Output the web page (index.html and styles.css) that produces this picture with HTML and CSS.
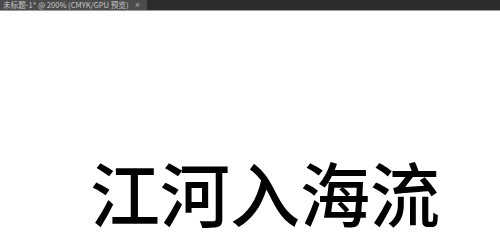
FILE: index.html
```html
<!DOCTYPE html>
<html>
<head>
<meta charset="utf-8">
<link rel="stylesheet" href="styles.css">
</head>
<body>
<div class="tabbar">
  <div class="tab"><span class="tab-title">未标题-1* @ 200% (CMYK/GPU 预览)</span><span class="tab-close">×</span></div>
</div>
<div class="canvas">
  <div class="headline">江河入海流</div>
</div>
</body>
</html>
```
FILE: styles.css
```css
html, body {
  margin: 0;
  padding: 0;
  width: 500px;
  height: 243px;
  overflow: hidden;
  background: #ffffff;
}
.tabbar {
  height: 10px;
  background: #2c2c2c;
  display: flex;
  border-bottom: 1px solid #9a9a9a;
}
.tab {
  width: 147px;
  background: #4b4b4b;
  display: flex;
  align-items: center;
  padding-left: 3px;
  box-sizing: border-box;
  gap: 6px;
}
.tab-title {
  font-family: "Noto Sans CJK SC", sans-serif;
  font-size: 7.6px;
  line-height: 10px;
  color: #c8c8c8;
  white-space: nowrap;
}
.tab-close {
  font-family: "DejaVu Sans", sans-serif;
  font-size: 7px;
  line-height: 10px;
  color: #bcbcbc;
}
.canvas {
  height: 232px;
  display: flex;
  justify-content: flex-start;
  align-items: flex-end;
}
.headline {
  font-family: "Noto Sans CJK SC", sans-serif;
  font-weight: 500;
  font-size: 70px;
  line-height: 80px;
  color: #000000;
  margin-left: 90px;
  margin-bottom: 11px;
  white-space: nowrap;
}
```
